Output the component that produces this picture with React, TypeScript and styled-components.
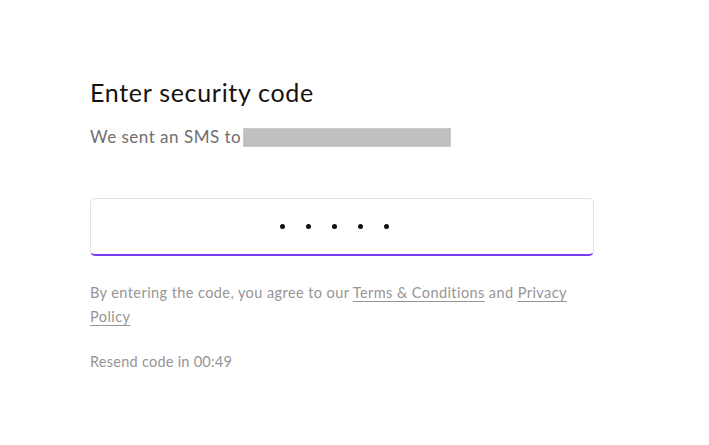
import * as React from 'react';
import styled, { createGlobalStyle } from 'styled-components';

const GlobalStyle = createGlobalStyle`
  body {
    margin: 0;
    background: #ffffff;
    font-family: Lato, "Noto Sans", Arial, sans-serif;
  }
`;

const Page = styled.main`
  width: 709px;
  height: 445px;
  box-sizing: border-box;
  padding: 76px 0 0 90px;
`;

const Form = styled.section`
  width: 504px;
  display: flex;
  flex-direction: column;
`;

const Title = styled.h1`
  margin: 0;
  font-size: 25px;
  line-height: 32px;
  font-weight: 400;
  color: #17120f;
  letter-spacing: 0.7px;
`;

const Subtitle = styled.p`
  margin: 17px 0 0;
  display: flex;
  align-items: center;
  gap: 2px;
  font-size: 17px;
  line-height: 24px;
  color: #6f6f6f;
  letter-spacing: 0.5px;
`;

const Redacted = styled.span`
  display: inline-block;
  width: 208px;
  height: 19px;
  background: #c0c0c0;
  box-shadow: inset 0 0 0 1px #cacaca;
`;

const CodeField = styled.div`
  margin-top: 49px;
  height: 58px;
  box-sizing: border-box;
  border: 1px solid #e3e3e3;
  border-bottom: 2px solid #7b3cf0;
  border-radius: 5px;
  display: flex;
  align-items: center;
  justify-content: center;
  gap: 21px;
  padding: 0 15px 1px 0;
`;

const Dot = styled.span`
  width: 5px;
  height: 5px;
  border-radius: 50%;
  background: #111111;
`;

const Note = styled.p<{ $spacing: number; $top: number }>`
  margin: ${(p) => p.$top}px 0 0;
  font-size: 14.5px;
  line-height: 24px;
  color: #959595;
  letter-spacing: ${(p) => p.$spacing}px;
`;

const Link = styled.a`
  color: #959595;
  text-decoration: underline;
  text-underline-offset: 3px;
`;

export default function App() {
  const digits = 5;
  return (
    <>
      <GlobalStyle />
      <Page>
        <Form>
          <Title>Enter security code</Title>
          <Subtitle>
            We sent an SMS to <Redacted />
          </Subtitle>
          <CodeField>
            {Array.from({ length: digits }).map((_, i) => (
              <Dot key={i} />
            ))}
          </CodeField>
          <Note $top={25} $spacing={0.42}>
            By entering the code, you agree to our <Link href="#">Terms &amp; Conditions</Link> and{' '}
            <Link href="#">Privacy Policy</Link>
          </Note>
          <Note $top={21} $spacing={0.25}>
            Resend code in 00:49
          </Note>
        </Form>
      </Page>
    </>
  );
}
